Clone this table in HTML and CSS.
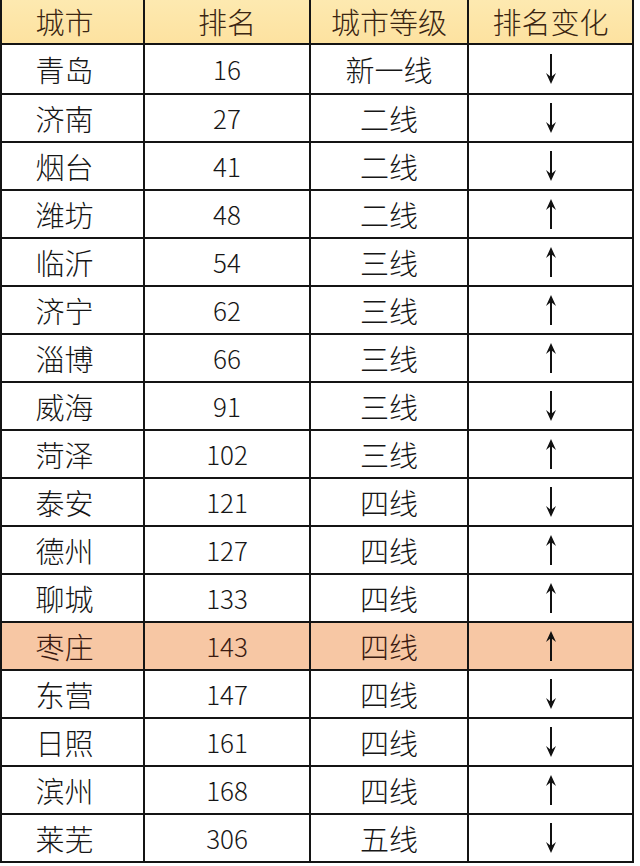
FILE: index.html
```html
<!DOCTYPE html>
<html lang="zh-CN">
<head>
<meta charset="utf-8">
<title>城市排名</title>
<link rel="stylesheet" href="styles.css">
</head>
<body>
<svg width="0" height="0" class="defs">
  <defs>
    <symbol id="down" viewBox="0 0 12 30">
      <path d="M6 0V27" stroke="#111" stroke-width="2" fill="none"/>
      <path d="M1 19L6 30L11 19L6 23Z" fill="#111"/>
    </symbol>
    <symbol id="up" viewBox="0 0 12 30">
      <path d="M6 3V30" stroke="#111" stroke-width="2" fill="none"/>
      <path d="M1 11L6 0L11 11L6 7Z" fill="#111"/>
    </symbol>
  </defs>
</svg>
<div class="grid">
  <div class="cell head c1">城市</div><div class="cell head">排名</div><div class="cell head">城市等级</div><div class="cell head">排名变化</div>

  <div class="cell c1">青岛</div><div class="cell num">16</div><div class="cell">新一线</div><div class="cell"><svg class="arrow"><use href="#down"/></svg></div>
  <div class="cell c1">济南</div><div class="cell num">27</div><div class="cell">二线</div><div class="cell"><svg class="arrow"><use href="#down"/></svg></div>
  <div class="cell c1">烟台</div><div class="cell num">41</div><div class="cell">二线</div><div class="cell"><svg class="arrow"><use href="#down"/></svg></div>
  <div class="cell c1">潍坊</div><div class="cell num">48</div><div class="cell">二线</div><div class="cell"><svg class="arrow"><use href="#up"/></svg></div>
  <div class="cell c1">临沂</div><div class="cell num">54</div><div class="cell">三线</div><div class="cell"><svg class="arrow"><use href="#up"/></svg></div>
  <div class="cell c1">济宁</div><div class="cell num">62</div><div class="cell">三线</div><div class="cell"><svg class="arrow"><use href="#up"/></svg></div>
  <div class="cell c1">淄博</div><div class="cell num">66</div><div class="cell">三线</div><div class="cell"><svg class="arrow"><use href="#up"/></svg></div>
  <div class="cell c1">威海</div><div class="cell num">91</div><div class="cell">三线</div><div class="cell"><svg class="arrow"><use href="#down"/></svg></div>
  <div class="cell c1">菏泽</div><div class="cell num">102</div><div class="cell">三线</div><div class="cell"><svg class="arrow"><use href="#up"/></svg></div>
  <div class="cell c1">泰安</div><div class="cell num">121</div><div class="cell">四线</div><div class="cell"><svg class="arrow"><use href="#down"/></svg></div>
  <div class="cell c1">德州</div><div class="cell num">127</div><div class="cell">四线</div><div class="cell"><svg class="arrow"><use href="#up"/></svg></div>
  <div class="cell c1">聊城</div><div class="cell num">133</div><div class="cell">四线</div><div class="cell"><svg class="arrow"><use href="#up"/></svg></div>
  <div class="cell c1 hl">枣庄</div><div class="cell num hl">143</div><div class="cell hl">四线</div><div class="cell hl"><svg class="arrow"><use href="#up"/></svg></div>
  <div class="cell c1">东营</div><div class="cell num">147</div><div class="cell">四线</div><div class="cell"><svg class="arrow"><use href="#down"/></svg></div>
  <div class="cell c1">日照</div><div class="cell num">161</div><div class="cell">四线</div><div class="cell"><svg class="arrow"><use href="#down"/></svg></div>
  <div class="cell c1">滨州</div><div class="cell num">168</div><div class="cell">四线</div><div class="cell"><svg class="arrow"><use href="#up"/></svg></div>
  <div class="cell c1">莱芜</div><div class="cell num">306</div><div class="cell">五线</div><div class="cell"><svg class="arrow"><use href="#down"/></svg></div>
</div>
</body>
</html>
```
FILE: styles.css
```css
html, body {
  margin: 0;
  padding: 0;
  background: #fff;
}
.defs {
  position: absolute;
}
.grid {
  display: grid;
  width: 630px;
  grid-template-columns: 141px 164px 156px 163px;
  grid-template-rows: 43px 48px repeat(16, 46px);
  gap: 2px;
  padding: 0 2px 2px 2px;
  background: #141414;
  font-family: "Noto Sans CJK SC", "Noto Sans", sans-serif;
  font-weight: 300;
  font-size: 29px;
  color: #161616;
}
.cell {
  background: #fff;
  display: flex;
  align-items: center;
  justify-content: center;
  line-height: 1;
}
.c1 {
  padding-right: 16px;
}
.head {
  background: linear-gradient(#fde9b0, #fde2a0);
  color: #3a2512;
}
.num {
  font-size: 26px;
}
.hl {
  background: #f7c7a4;
  color: #3a1a10;
}
.arrow {
  width: 12px;
  height: 30px;
}
```
